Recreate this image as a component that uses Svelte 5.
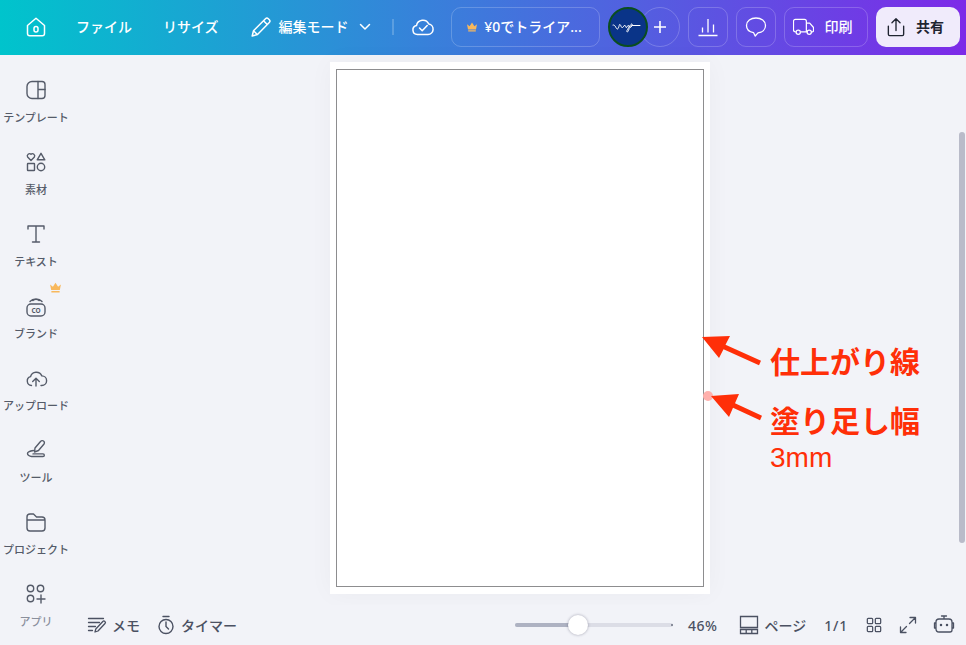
<script>
  const tools = [
    { label: 'テンプレート', icon: 'template' },
    { label: '素材', icon: 'elements' },
    { label: 'テキスト', icon: 'text' },
    { label: 'ブランド', icon: 'brand', crown: true },
    { label: 'アップロード', icon: 'upload' },
    { label: 'ツール', icon: 'tools' },
    { label: 'プロジェクト', icon: 'folder' },
    { label: 'アプリ', icon: 'apps', dim: true }
  ];
</script>

{#snippet crown(size)}
  <svg width={size} height={size} viewBox="0 0 12 12" fill="#f8b85c"><path d="M1 3.2l2.6 2L6 1.6l2.4 3.6L11 3.2 10 8.4H2zM2.2 9.2h7.6v1.4H2.2z"/></svg>
{/snippet}

<div class="app">
  <header class="topbar">
    <div class="top-left">
      <button class="home" aria-label="ホーム">
        <svg width="24" height="24" viewBox="0 0 24 24" fill="none" stroke="#fff" stroke-width="1.5" stroke-linejoin="round"><path d="M3.5 10.5 12 3.2l8.500 7.300v8a2.300 2.300 0 0 1-2.300 2.300H5.800a2.300 2.300 0 0 1-2.300-2.300z"/><rect x="10" y="11.500" width="4" height="5.500" rx="2"/></svg>
      </button>
      <span class="nav file">ファイル</span>
      <span class="nav resize">リサイズ</span>
      <svg class="pen" width="24" height="24" viewBox="0 0 24 24" fill="none" stroke="#fff" stroke-width="1.500" stroke-linejoin="round"><path d="M3.200 21l1.300-5.300L16.500 3.700a2 2 0 0 1 2.800 0l1 1a2 2 0 0 1 0 2.800L8.500 19.500z"/><path d="M14.500 5.700l3.800 3.800M4.500 15.700l3.800 3.800"/></svg>
      <span class="nav mode">編集モード</span>
      <svg class="chev" width="12" height="8" viewBox="0 0 12 8" fill="none" stroke="#fff" stroke-width="1.500" stroke-linecap="round" stroke-linejoin="round"><path d="M1.500 1.500 6 6l4.500-4.500"/></svg>
      <span class="sep"></span>
      <svg class="cloud" width="24" height="24" viewBox="0 0 24 24" fill="none" stroke="#fff" stroke-width="1.500" stroke-linecap="round" stroke-linejoin="round"><path d="M6.500 19.500a4.500 4.500 0 0 1-1-8.900A6.500 6.500 0 0 1 17.800 9a5.300 5.300 0 0 1-.8 10.500z"/><path d="m8.500 13 2.700 2.700 5-5.200"/></svg>
    </div>
    <div class="top-right">
      <button class="trial outline">{@render crown(12)}<span>¥0でトライア...</span></button>
      <div class="people">
        <div class="avatar">
          <svg width="38" height="38" viewBox="0 0 38 38" fill="none" stroke="#fff" stroke-width="1" stroke-linecap="round"><path d="M4 17c2.500-1 3 4.500 4.500 4s1.500-5 2.500-4.500 1 3.500 2.500 3 1-2.500 2.500-2 .5 2.500 1.500 2 1-2.500 2-2 1 2.500 0 5-2.500 1.500-1-1 3-5 4-5.500 1 1-.5 3 0-1.500 1-1.500h8"/></svg>
        </div>
        <button class="plus outline" aria-label="追加">
          <svg width="14" height="14" viewBox="0 0 14 14" stroke="#fff" stroke-width="1.600"><path d="M7 1v12M1 7h12"/></svg>
        </button>
      </div>
      <button class="square outline" aria-label="分析">
        <svg width="22" height="22" viewBox="0 0 22 22" fill="none" stroke="#fff" stroke-width="1.300"><path d="M1.500 19.500h19M5.500 16.500v-5M11 16.500V3M16.500 16.500v-8"/></svg>
      </button>
      <button class="square outline" aria-label="コメント">
        <svg width="22" height="22" viewBox="0 0 22 22" fill="none" stroke="#fff" stroke-width="1.300" stroke-linejoin="round"><path d="M11 2c5.200 0 9.500 3 9.500 7.500 0 4-3.200 6.800-7.500 7.400L10.200 20l-1.600-3.300C4.600 16 1.500 13.400 1.500 9.500 1.500 5 5.800 2 11 2z"/></svg>
      </button>
      <button class="print outline">
        <svg width="21" height="18" viewBox="0 0 22 18" fill="none" stroke="#fff" stroke-width="1.300" stroke-linejoin="round"><path d="M3 14H2.500a2 2 0 0 1-2-2V3a2 2 0 0 1 2-2H12a2 2 0 0 1 2 2v11H8M14 5h3.500l4 4.500V13a1 1 0 0 1-1 1H19M14 14h1"/><circle cx="5.500" cy="14.500" r="2.200"/><circle cx="17" cy="14.500" r="2.200"/></svg>
        <span>印刷</span>
      </button>
      <button class="share">
        <svg width="18" height="20" viewBox="0 0 20 22" fill="none" stroke="#1f2430" stroke-width="1.500" stroke-linecap="round" stroke-linejoin="round"><path d="M1.500 10v9a1.500 1.500 0 0 0 1.500 1.500h14a1.500 1.500 0 0 0 1.500-1.500v-9M10 15V2M5.500 6.300 10 1.800l4.500 4.500"/></svg>
        <span>共有</span>
      </button>
    </div>
  </header>

  <div class="body">
    <aside class="sidebar">
      {#each tools as tool}
        <div class="tool" class:dim={tool.dim}>
          {#if tool.crown}<span class="tool-crown">{@render crown(13)}</span>{/if}
          <svg width="24" height="24" viewBox="0 0 24 24" fill="none" stroke="currentColor" stroke-width="1.400" stroke-linejoin="round" stroke-linecap="round">
            {#if tool.icon === 'template'}
              <path d="M8 3.500h10a3 3 0 0 1 3 3v11a3 3 0 0 1-3 3H8a5 5 0 0 1-5-5v-7a5 5 0 0 1 5-5z"/><path d="M14 3.500v17M14 11.500h7"/>
            {:else if tool.icon === 'elements'}
              <path d="M7 10.500 3.600 7a2.200 2.200 0 0 1 3.400-2.700A2.200 2.200 0 0 1 10.400 7z"/><path d="M17 3.300l3.800 6.500h-7.600z"/><rect x="3.500" y="13.500" width="7" height="7" rx=".5"/><circle cx="17" cy="17" r="3.700"/>
            {:else if tool.icon === 'text'}
              <path d="M4 7V4h16v3M4 4h16M12 4v16M8.500 20h7"/>
            {:else if tool.icon === 'brand'}
              <rect x="3" y="10" width="18" height="12" rx="4"/><path d="M6 7.500c3-3.500 9-3.500 12 0M9 6.500c2-1.500 4-1.500 6 0"/>
              <text x="12" y="18.500" text-anchor="middle" class="co">CO</text>
            {:else if tool.icon === 'upload'}
              <path d="M7.500 19.500a4.500 4.500 0 0 1-1-8.800 6 6 0 0 1 11.300-.8 4.800 4.800 0 0 1 0 9.600h-.8"/><path d="M12 20v-7.500M8.700 15.500 12 12.300l3.300 3.200"/>
            {:else if tool.icon === 'tools'}
              <path d="M10.500 14l.5-4 5.500-6.500a2 2 0 0 1 3.500 2.500l-5.500 6.500z"/><path d="M9.500 12.500C6 13 3.500 14 3.500 15.500s2 3 4 3H19a1.300 1.300 0 0 0 0-2.600H9"/>
            {:else if tool.icon === 'folder'}
              <path d="M3 7a3 3 0 0 1 3-3h3.500l3 3H18a3 3 0 0 1 3 3v8a3 3 0 0 1-3 3H6a3 3 0 0 1-3-3zM3 10h18"/>
            {:else}
              <circle cx="6.500" cy="6.500" r="3.200"/><circle cx="16.500" cy="6.500" r="3.200"/><circle cx="6.500" cy="16.500" r="3.200"/><path d="M17 13v8M13 17h8"/>
            {/if}
          </svg>
          <span>{tool.label}</span>
        </div>
      {/each}
    </aside>

    <main class="canvas">
      <div class="sheet"><div class="trim"></div></div>
      <span class="dot"></span>
      <svg class="arrows" width="70" height="100" viewBox="0 0 70 100" fill="#ff2f08">
        <path d="M2 2 30 1 25.500 9.700 61 25.700 59 30.300 23.500 14.300 19 23z"/>
        <path d="M11 61 39 59 35 68.200 62 80.700 60 85.300 33 72.800 29 82z"/>
      </svg>
      <div class="note">
        <p class="big first">仕上がり線</p>
        <p class="big second">塗り足し幅</p>
        <p class="mm">3mm</p>
      </div>
      <div class="scrollbar"></div>
    </main>
  </div>

  <footer class="bottombar">
    <div class="foot-left">
      <svg width="20" height="20" viewBox="0 0 20 20" fill="none" stroke="#4b5162" stroke-width="1.300" stroke-linecap="round" stroke-linejoin="round"><path d="M1.500 3.500h15M1.500 7.500h11M1.500 11.500h7M1.500 15.500h4M8 17l.8-3 7-7.500a1.400 1.400 0 0 1 2.200 2l-7 7.500z"/></svg>
      <span class="foot-label memo">メモ</span>
      <svg class="timer" width="20" height="20" viewBox="0 0 20 20" fill="none" stroke="#4b5162" stroke-width="1.400" stroke-linecap="round"><circle cx="10" cy="11.500" r="7"/><path d="M7 1.500h6M10 7v4.500l2.500 2.500"/></svg>
      <span class="foot-label">タイマー</span>
    </div>
    <div class="foot-right">
      <div class="slider">
        <span class="fill"></span>
        <span class="thumb"></span>
      </div>
      <span class="foot-label zoom">46%</span>
      <svg class="pages" width="20" height="20" viewBox="0 0 20 20" fill="none" stroke="#4b5162" stroke-width="1.300"><path d="M1.500 1.500h17v11h-17zM1.500 14.500h17v4h-17zM7.200 14.500v4M12.800 14.500v4"/></svg>
      <span class="foot-label">ページ</span>
      <span class="foot-label count">1/1</span>
      <svg class="grid" width="16" height="16" viewBox="0 0 18 18" fill="none" stroke="#4b5162" stroke-width="1.400"><rect x="1.500" y="1.500" width="6" height="6" rx="1"/><rect x="10.500" y="1.500" width="6" height="6" rx="1"/><rect x="1.500" y="10.500" width="6" height="6" rx="1"/><rect x="10.500" y="10.500" width="6" height="6" rx="1"/></svg>
      <svg class="expand" width="18" height="18" viewBox="0 0 18 18" fill="none" stroke="#4b5162" stroke-width="1.300" stroke-linecap="round" stroke-linejoin="round"><path d="M11 1.500h5.500V7M16 2l-5.500 5.500M7 16.500H1.500V11M2 16l5.500-5.500"/></svg>
      <svg class="bot" width="22" height="22" viewBox="0 0 22 22" fill="none" stroke="#4b5162" stroke-width="1.300" stroke-linecap="round" stroke-linejoin="round"><path d="M3 8a3 3 0 0 1 3-3h10a3 3 0 0 1 3 3v8a2 2 0 0 1-2 2H6a3 3 0 0 1-3-3zM11 5V2M8.500 2h5M3 9H1.500v5H3M19 9h1.500v5H19"/><circle cx="8" cy="11" r=".6"/><circle cx="14" cy="11" r=".6"/></svg>
    </div>
  </footer>
</div>

<style>
  :global(body) {
    margin: 0;
    background: #f2f3f8;
    font-family: "Noto Sans", "Noto Sans CJK JP", sans-serif;
  }

  button {
    font: inherit;
    color: inherit;
    background: none;
    padding: 0;
    border: 0;
  }

  .app {
    width: 966px;
    height: 645px;
    overflow: hidden;
    display: flex;
    flex-direction: column;
    position: relative;
  }

  .topbar {
    box-sizing: border-box;
    height: 55px;
    padding-bottom: 1px;
    flex: none;
    display: flex;
    justify-content: space-between;
    align-items: center;
    color: #fff;
    background: linear-gradient(90deg, #00c4cc 0%, #3f78dc 50%, #7d2ae8 100%);
  }

  .top-left, .top-right {
    display: flex;
    align-items: center;
  }

  .home {
    display: flex;
    margin-left: 24px;
  }

  .nav {
    font-size: 14px;
    font-weight: 500;
    white-space: nowrap;
    padding-bottom: 2px;
  }

  .file { margin-left: 28px; }
  .resize { margin-left: 31px; }
  .pen { margin-left: 30px; }
  .mode { margin-left: 6px; }
  .chev { margin-left: 10px; }

  .sep {
    width: 2px;
    height: 16px;
    margin-left: 21px;
    background: rgba(255, 255, 255, .2);
  }

  .cloud { margin-left: 17px; }

  .top-right {
    margin-right: 6px;
  }

  .outline {
    box-sizing: border-box;
    height: 40px;
    display: flex;
    align-items: center;
    justify-content: center;
    border: 1px solid rgba(255, 255, 255, .2);
    border-radius: 10px;
    color: #fff;
    font-size: 14px;
    font-weight: 500;
    white-space: nowrap;
  }

  .outline span, .share span {
    padding-bottom: 2px;
  }

  .trial {
    width: 149px;
    gap: 6px;
    padding-right: 3px;
  }

  .people {
    display: flex;
    align-items: center;
    margin-left: 8px;
  }

  .avatar {
    box-sizing: border-box;
    width: 40px;
    height: 40px;
    border: 2px solid #0a4d1f;
    border-radius: 50%;
    background: #0a3488;
    position: relative;
    z-index: 1;
  }

  .avatar svg {
    display: block;
    margin: -1px;
  }

  .plus {
    width: 40px;
    border-radius: 50%;
    margin-left: -8px;
  }

  .square {
    width: 40px;
    margin-left: 8px;
  }

  .print {
    width: 84px;
    margin-left: 8px;
    gap: 11px;
    padding-right: 7px;
  }

  .share {
    box-sizing: border-box;
    width: 84px;
    height: 40px;
    margin-left: 8px;
    padding-right: 5px;
    display: flex;
    align-items: center;
    justify-content: center;
    gap: 11px;
    border-radius: 10px;
    background: #f0ebfb;
    color: #1f2430;
    font-size: 14px;
    font-weight: 700;
  }

  .body {
    flex: 1;
    min-height: 0;
    display: flex;
  }

  .sidebar {
    width: 72px;
    flex: none;
    padding-top: 23px;
    color: #555b69;
  }

  .tool {
    position: relative;
    height: 72px;
    display: flex;
    flex-direction: column;
    align-items: center;
  }

  .tool span:last-child {
    margin-top: 8px;
    font-size: 11px;
    line-height: 16px;
    font-weight: 500;
    white-space: nowrap;
  }

  .tool.dim span:last-child {
    color: #8a8f9c;
  }

  .tool-crown {
    position: absolute;
    left: 49px;
    top: -13px;
    display: flex;
  }

  .co {
    fill: currentColor;
    stroke: none;
    font-family: "Noto Sans", sans-serif;
    font-size: 6.5px;
    font-weight: 700;
  }

  .canvas {
    flex: 1;
    position: relative;
    padding-top: 7px;
  }

  .sheet {
    box-sizing: border-box;
    width: 380px;
    height: 532px;
    margin-left: 258px;
    padding: 7px 6px;
    background: #fff;
    box-shadow: 0 0 24px rgba(30, 30, 70, .035);
  }

  .trim {
    box-sizing: border-box;
    height: 518px;
    border: 1px solid #8d8d8f;
  }

  .dot {
    position: absolute;
    left: 631px;
    top: 336px;
    width: 10px;
    height: 10px;
    border-radius: 50%;
    background: #ffb0ac;
  }

  .arrows {
    position: absolute;
    left: 628px;
    top: 280px;
  }

  .note {
    position: absolute;
    left: 698px;
    top: 288px;
    color: #ff2f08;
  }

  .note p {
    margin: 0;
    white-space: nowrap;
  }

  .big {
    font-size: 30px;
    line-height: 38px;
    font-weight: 700;
  }

  .second {
    margin-top: 21px !important;
  }

  .mm {
    margin-top: 1px !important;
    font-family: "Liberation Sans", sans-serif;
    font-size: 28px;
    line-height: 34px;
  }

  .scrollbar {
    position: absolute;
    right: 1px;
    top: 77px;
    width: 6px;
    height: 411px;
    border-radius: 3px;
    background: #b9bbc9;
  }

  .bottombar {
    position: absolute;
    left: 72px;
    right: 0;
    bottom: 0;
    height: 40px;
    display: flex;
    justify-content: space-between;
    align-items: center;
    color: #4b5162;
    background: #f2f3f8;
  }

  .foot-left, .foot-right {
    display: flex;
    align-items: center;
  }

  .foot-left { margin-left: 15px; }
  .foot-right { margin-right: 11px; }

  .foot-label {
    font-size: 14px;
    font-weight: 500;
    white-space: nowrap;
  }

  .memo { margin-left: 5px; }
  .timer { margin-left: 16px; margin-right: 5px; }

  .slider {
    position: relative;
    width: 158px;
    height: 4px;
    border-radius: 2px;
    background: #dcdde6;
  }

  .slider::after {
    content: "";
    position: absolute;
    right: 0;
    top: 1px;
    width: 2px;
    height: 2px;
    border-radius: 50%;
    background: #6b7080;
  }

  .fill {
    position: absolute;
    left: 0;
    top: 0;
    bottom: 0;
    width: 63px;
    border-radius: 2px;
    background: #aeb2c2;
  }

  .thumb {
    position: absolute;
    left: 53px;
    top: -8px;
    width: 20px;
    height: 20px;
    border-radius: 50%;
    background: #fff;
    box-shadow: 0 0 3px rgba(40, 40, 70, .4);
  }

  .zoom { margin-left: 15px; letter-spacing: .5px; }
  .pages { margin-left: 22px; margin-right: 5px; }
  .count { margin-left: 18px; letter-spacing: .8px; }
  .grid { margin-left: 18px; }
  .expand { margin-left: 17px; }
  .bot { margin-left: 16px; }
</style>
